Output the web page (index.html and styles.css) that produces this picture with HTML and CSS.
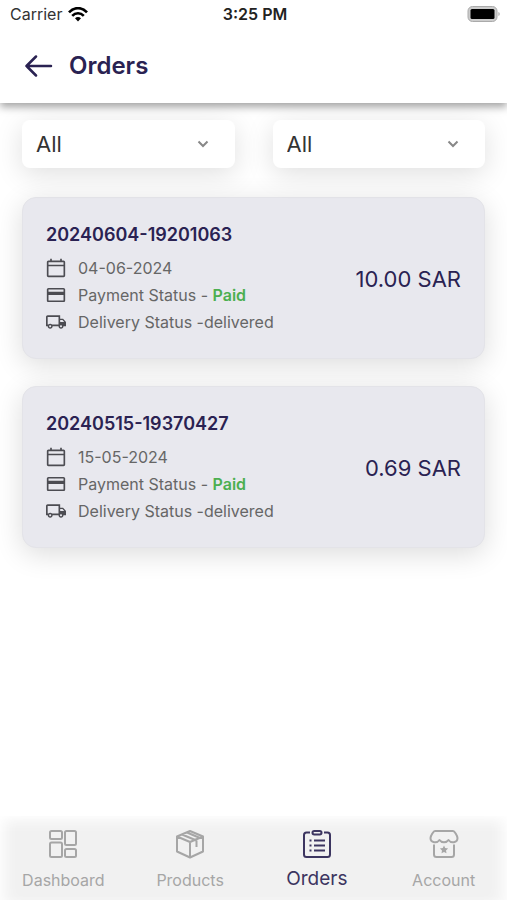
FILE: index.html
```html
<!DOCTYPE html>
<html lang="en">
<head>
<meta charset="utf-8">
<meta name="viewport" content="width=device-width, initial-scale=1">
<title>Orders</title>
<link rel="stylesheet" href="styles.css">
</head>
<body>
<svg class="sprite" aria-hidden="true">
  <symbol id="calendar" viewBox="0 0 24 24"><path fill="currentColor" d="M21 3h-2V1h-2v2H7V1H5v2H3c-1.100 0-2 .9-2 2v16c0 1.100.9 2 2 2h18c1.100 0 2-.9 2-2V5c0-1.100-.9-2-2-2zm0 18H3V10h18v11zm0-13H3V5h18v3z"/></symbol>
  <symbol id="card" viewBox="0 0 24 24"><path fill="currentColor" d="M21 3.500H3c-1.110 0-2 .89-2 2v13c0 1.110.89 2 2 2h18c1.110 0 2-.89 2-2v-13c0-1.110-.89-2-2-2zm0 15H3V12h18v6.500zm0-10.500H3V5.500h18V8z"/></symbol>
  <symbol id="truck" viewBox="0 0 24 24"><path fill="currentColor" fill-rule="evenodd" d="M20.500 8H17V4H2C.9 4 0 4.900 0 6v11h2c0 1.660 1.340 3 3 3s3-1.340 3-3h7c0 1.660 1.340 3 3 3s3-1.340 3-3h3v-5l-3.500-4zm-.7 1.500l2 2.500H17V9.500h2.800zM5 18.200c-.66 0-1.200-.54-1.200-1.200s.54-1.200 1.200-1.200 1.200.54 1.200 1.200-.54 1.200-1.200 1.200zM7.220 15C6.670 14.390 5.890 14 5 14s-1.670.39-2.220 1H2V6h13v9H7.220zM18 18.200c-.66 0-1.200-.54-1.200-1.200s.54-1.200 1.200-1.200 1.200.54 1.200 1.200-.54 1.200-1.200 1.200z"/></symbol>
</svg>

<header class="top">
  <div class="status">
    <div class="carrier">
      <span>Carrier</span>
      <svg width="20" height="15" viewBox="0 0 20 15" fill="none" stroke="#000" stroke-width="2.600" aria-hidden="true">
        <path d="M1 5.400C6-.3 14-.3 19 5.400"/><path d="M4.200 8.800c3.300-3.500 8.300-3.500 11.600 0"/><path d="M7 11.200c1.800-1.500 4.200-1.500 6 0L10 14.400z" fill="#000" stroke="none"/>
      </svg>
    </div>
    <time class="clock">3:25 PM</time>
    <svg class="battery" width="33" height="16" viewBox="0 0 33 16" aria-hidden="true">
      <rect x="1" y=".5" width="29" height="15" rx="4.500" fill="#ccc" stroke="#aaa"/>
      <rect x="3.500" y="3" width="24" height="10" rx="1.500" fill="#000"/>
      <path d="M31.500 6c1.500.6 1.500 3.400 0 4z" fill="#999"/>
    </svg>
  </div>
  <div class="bar">
    <a class="back" href="#" aria-label="Back">
      <svg width="28" height="22" viewBox="0 0 28 22" fill="none" stroke="currentColor" stroke-width="2.500" stroke-linecap="round" stroke-linejoin="round"><path d="M26 11H1.500M11 1.500L1.500 11L11 20.500"/></svg>
    </a>
    <h1>Orders</h1>
  </div>
</header>

<main>
  <form class="filters">
    <div class="filter">
      <select aria-label="Payment status"><option>All</option></select>
      <svg width="12" height="8" viewBox="0 0 12 8" aria-hidden="true"><path d="M1.500 1.500L6 6L10.500 1.500"/></svg>
    </div>
    <div class="filter">
      <select aria-label="Delivery status"><option>All</option></select>
      <svg width="12" height="8" viewBox="0 0 12 8" aria-hidden="true"><path d="M1.500 1.500L6 6L10.500 1.500"/></svg>
    </div>
  </form>

  <article class="order">
    <div>
      <h2>20240604-19201063</h2>
      <ul>
        <li><svg class="icon"><use href="#calendar"/></svg><span>04-06-2024</span></li>
        <li><svg class="icon"><use href="#card"/></svg><span>Payment Status - <strong>Paid</strong></span></li>
        <li><svg class="icon"><use href="#truck"/></svg><span>Delivery Status -delivered</span></li>
      </ul>
    </div>
    <p class="price">10.00 SAR</p>
  </article>

  <article class="order">
    <div>
      <h2>20240515-19370427</h2>
      <ul>
        <li><svg class="icon"><use href="#calendar"/></svg><span>15-05-2024</span></li>
        <li><svg class="icon"><use href="#card"/></svg><span>Payment Status - <strong>Paid</strong></span></li>
        <li><svg class="icon"><use href="#truck"/></svg><span>Delivery Status -delivered</span></li>
      </ul>
    </div>
    <p class="price">0.69 SAR</p>
  </article>
</main>

<nav class="tabs">
  <a href="#">
    <svg viewBox="0 0 30 30"><rect x="2" y="2" width="12" height="8" rx="1.500"/><rect x="17" y="2" width="11" height="14" rx="1.500"/><rect x="2" y="13.500" width="12" height="14.500" rx="1.500"/><rect x="17" y="20" width="11" height="8" rx="1.500"/></svg>
    <span>Dashboard</span>
  </a>
  <a href="#">
    <svg viewBox="0 0 30 30"><path d="M15 2L28 7.500V22.500L15 28.500L2 22.500V7.500zM2 7.500L15 13L28 7.500M15 13V28.500M7 5.500L21.500 11.500V18M12 3.500L25 9"/></svg>
    <span>Products</span>
  </a>
  <a href="#" class="active" aria-current="page">
    <svg viewBox="0 0 30 30"><path d="M8 3.500H4.500A2.500 2.500 0 0 0 2 6V25.500A2.500 2.500 0 0 0 4.500 28H25.500A2.500 2.500 0 0 0 28 25.500V6A2.500 2.500 0 0 0 25.500 3.500H22M12 11.500H23M12 16.500H23M12 21.500H23M7.500 11.500h2M7.500 16.500h2M7.500 21.500h2"/><rect x="10.500" y="2" width="9" height="3.500" rx="1.700"/></svg>
    <span>Orders</span>
  </a>
  <a href="#">
    <svg viewBox="0 0 30 30"><path d="M6 2H24C25.500 2 28.500 7 28.500 9C28.500 14 22 14.500 19.500 11C17.500 14 12.500 14 10.500 11C8 14.500 1.500 14 1.500 9C1.500 7 4.500 2 6 2zM5 15.500V25.500A2.500 2.500 0 0 0 7.500 28H22.500A2.500 2.500 0 0 0 25 25.500V15.500"/><path class="star" d="M15 16.500l1.200 2.500 2.900.4-2.100 2 .5 2.900-2.500-1.400-2.500 1.400.5-2.900-2.100-2 2.900-.4z"/></svg>
    <span>Account</span>
  </a>
</nav>
</body>
</html>
```
FILE: styles.css
```css
* { box-sizing: border-box; }

body {
  margin: 0;
  min-height: 100vh;
  display: flex;
  flex-direction: column;
  background: #fff;
  color: #333;
  font-family: Inter, "Liberation Sans", sans-serif;
}

h1, h2, p, ul { margin: 0; padding: 0; }
a { color: inherit; text-decoration: none; }
.sprite { display: none; }

.top {
  position: relative;
  z-index: 1;
  background: #fff;
  box-shadow: 0 4px 8px rgba(0, 0, 0, .36);
}

.status {
  display: grid;
  grid-template-columns: 1fr auto 1fr;
  align-items: center;
  height: 30px;
  padding: 0 7px 2px 10px;
}
.carrier { display: flex; align-items: center; gap: 6px; font-size: 16px; }
.clock { color: #222; font-size: 16px; font-weight: 600; }
.battery { justify-self: end; }

.bar {
  display: flex;
  align-items: center;
  gap: 16px;
  height: 73px;
  padding: 0 25px 2px;
  color: #2a2252;
}
.back { display: flex; }
h1 { font-size: 24px; line-height: 28px; font-weight: 600; }

main { flex: 1; padding: 17px 22px 28px; }

.filters {
  display: grid;
  grid-template-columns: 1fr 1fr;
  gap: 38px;
  margin-bottom: 29px;
}
.filter {
  position: relative;
  border-radius: 8px;
  background: #fff;
  box-shadow: 0 6px 28px rgba(0, 0, 0, .13);
}
.filter select {
  display: block;
  width: 100%;
  height: 48px;
  padding: 0 14px;
  border: 0;
  border-radius: 8px;
  background: transparent;
  color: #333;
  font: 400 22px Inter, "Liberation Sans", sans-serif;
  appearance: none;
}
.filter svg {
  position: absolute;
  right: 26px;
  top: 20px;
  fill: none;
  stroke: #888;
  stroke-width: 2;
  pointer-events: none;
}

.order {
  display: flex;
  align-items: center;
  justify-content: space-between;
  padding: 25px 23px 23px;
  border: 1px solid #e3e3e8;
  border-radius: 14px;
  background: #e8e8ee;
  box-shadow: 0 6px 28px rgba(0, 0, 0, .14);
}
.order + .order { margin-top: 27px; }
.order h2 {
  margin-bottom: 7px;
  color: #2a2252;
  font-size: 18px;
  line-height: 24px;
  font-weight: 600;
}
.order ul { list-style: none; }
.order li {
  display: flex;
  align-items: center;
  gap: 12px;
  height: 27px;
  color: #666;
  font-size: 16px;
}
.order strong { color: #4caf50; font-weight: 600; }
.icon { width: 20px; height: 20px; color: #4c4c52; }
.price { color: #2a2252; font-size: 22px; line-height: 28px; }

.tabs {
  display: grid;
  grid-template-columns: repeat(4, 1fr);
  height: 84px;
  background: #f1f1f1;
  box-shadow: inset 0 12px 16px -8px #fff, inset 12px 0 16px -8px #fff, inset -12px 0 16px -8px #fff;
}
.tabs a {
  display: flex;
  flex-direction: column;
  align-items: center;
  gap: 9px;
  padding-top: 13px;
  color: #a6a6a6;
  font-size: 16px;
  line-height: 24px;
}
.tabs svg {
  width: 30px;
  height: 30px;
  fill: none;
  stroke: currentColor;
  stroke-width: 2;
  stroke-linejoin: round;
}
.tabs .star { fill: currentColor; stroke: none; }
.tabs .active { gap: 8px; color: #3c3560; font-size: 19px; }
```
